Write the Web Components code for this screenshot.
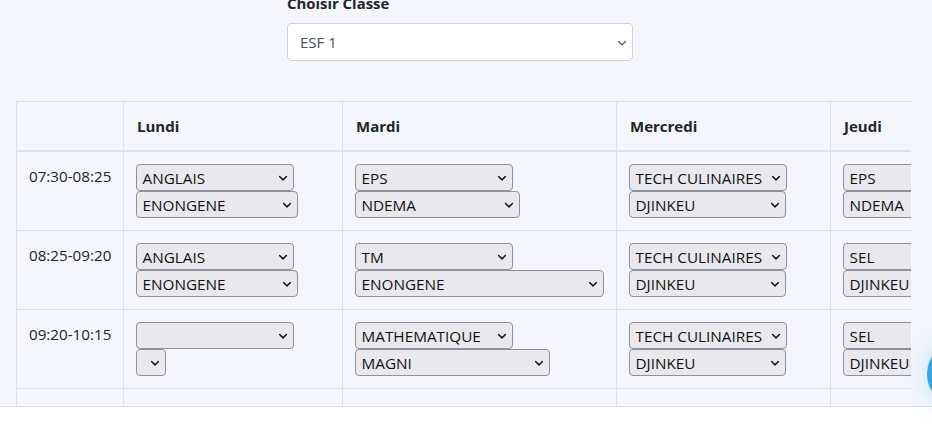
<!DOCTYPE html>
<html lang="fr">
<head>
<meta charset="utf-8">
<title>Emploi du temps</title>
<style>
  html, body { margin: 0; height: 100%; background: #fff; overflow: hidden; }
  body { font-family: "Open Sans", "Noto Sans", "Liberation Sans", sans-serif; color: #212529; }
</style>
</head>
<body>
<schedule-page>
  <class-picker label="Choisir Classe" value="ESF 1"></class-picker>
  <time-table></time-table>
</schedule-page>
<chat-bubble></chat-bubble>

<script>
const chevron = (sw) => `<svg viewBox="0 0 16 16" width="12" height="12" aria-hidden="true"><path d="M3.5 6l4.5 4.5L12.5 6" fill="none" stroke="currentColor" stroke-width="${sw}" stroke-linecap="round" stroke-linejoin="round"/></svg>`;

class SchedulePage extends HTMLElement {
  constructor() {
    super();
    this.attachShadow({ mode: 'open' });
    this.shadowRoot.innerHTML = `
      <style>
        :host {
          display: block;
          height: 407px;
          overflow: hidden;
          background: #f4f6fb;
          border-bottom: 1px solid #dfe1e6;
          box-sizing: border-box;
          padding: 0 21px 0 16px;
        }
      </style>
      <slot></slot>
    `;
  }
}

class ClassPicker extends HTMLElement {
  connectedCallback() {
    this.attachShadow({ mode: 'open' });
    this.shadowRoot.innerHTML = `
      <style>
        :host { display: block; margin: -9px 0 40px 271px; width: 346px; }
        label { display: block; font-size: 14.9px; font-weight: 700; line-height: 24px; margin-bottom: 8px; color: #212529; }
        .box {
          height: 38px; box-sizing: border-box; display: flex; align-items: center; justify-content: space-between;
          padding: 0 4px 0 12px; background: #fff; border: 1px solid #ced4da; border-radius: 4px;
          font-size: 15px; color: #495057;
        }
        svg { display: block; color: #495057; margin-top: 1px; }
      </style>
      <label>${this.getAttribute('label')}</label>
      <div class="box"><span>${this.getAttribute('value')}</span>${chevron(1.6)}</div>
    `;
  }
}

class PickBox extends HTMLElement {
  connectedCallback() {
    this.attachShadow({ mode: 'open' });
    this.shadowRoot.innerHTML = `
      <style>
        :host {
          display: flex; align-items: center; justify-content: space-between; box-sizing: border-box;
          height: 27px; padding: 0 4px 0 5.5px; background: #e9e9ed; border: 1px solid #8f8f9d; border-radius: 4px;
          font-size: 15.3px; color: #111; white-space: nowrap; overflow: hidden;
        }
        span { padding-top: 1px; }
        svg { display: block; flex: none; color: #15141a; }
      </style>
      <span><slot></slot></span>${chevron(2)}
    `;
    this.style.width = this.getAttribute('w') + 'px';
  }
}
customElements.define('pick-box', PickBox);

const DAYS = ['Lundi', 'Mardi', 'Mercredi', 'Jeudi'];
const WIDTHS = [107, 219, 274, 214, 170];
const ROWS = [
  ['07:30-08:25', [['ANGLAIS', 158, 'ENONGENE', 162], ['EPS', 158, 'NDEMA', 165], ['TECH CULINAIRES', 158, 'DJINKEU', 157], ['EPS', 158, 'NDEMA', 165]]],
  ['08:25-09:20', [['ANGLAIS', 158, 'ENONGENE', 162], ['TM', 158, 'ENONGENE', 249], ['TECH CULINAIRES', 158, 'DJINKEU', 157], ['SEL', 158, 'DJINKEU', 157]]],
  ['09:20-10:15', [['', 158, '', 30], ['MATHEMATIQUE', 158, 'MAGNI', 195], ['TECH CULINAIRES', 158, 'DJINKEU', 157], ['SEL', 158, 'DJINKEU', 157]]],
];

class TimeTable extends HTMLElement {
  connectedCallback() {
    this.attachShadow({ mode: 'open' });
    const cols = WIDTHS.map(w => `<col style="width:${w}px">`).join('');
    const head = DAYS.map(d => `<th>${d}</th>`).join('');
    const body = ROWS.map(([time, cells]) => `
      <tr>
        <td class="time">${time}</td>
        ${cells.map(c => `<td><div class="stack">
          <pick-box w="${c[1]}">${c[0]}</pick-box>
          <pick-box w="${c[3]}">${c[2]}</pick-box>
        </div></td>`).join('')}
        <td></td>
      </tr>`).join('');
    this.shadowRoot.innerHTML = `
      <style>
        :host { display: block; overflow: hidden; }
        table { border-collapse: collapse; table-layout: fixed; width: 984px; font-size: 15.2px; color: #212529; }
        th, td { border: 1px solid #dee2e6; padding: 12px; text-align: left; vertical-align: top; line-height: 24px; }
        th { font-size: 15px; font-weight: 700; height: 24px; border-bottom-width: 2px; padding: 12px 12px 12px 13px; }
        td { height: 54px; }
        .time { white-space: nowrap; padding-right: 0; }
        .stack { display: flex; flex-direction: column; align-items: flex-start; }
        .spacer td { height: 40px; }
      </style>
      <table>
        <colgroup>${cols}</colgroup>
        <thead><tr><th></th>${head}<th></th></tr></thead>
        <tbody>${body}
          <tr class="spacer"><td></td><td></td><td></td><td></td><td></td><td></td></tr>
        </tbody>
      </table>
    `;
  }
}

class ChatBubble extends HTMLElement {
  constructor() {
    super();
    this.attachShadow({ mode: 'open' });
    this.shadowRoot.innerHTML = `
      <style>
        :host {
          position: fixed; left: 927px; top: 340px; width: 68px; height: 68px; border-radius: 50%;
          background: #2ea8e8; box-shadow: 0 0 24px rgba(46, 168, 232, .25);
        }
      </style>
    `;
  }
}

customElements.define('schedule-page', SchedulePage);
customElements.define('class-picker', ClassPicker);
customElements.define('time-table', TimeTable);
customElements.define('chat-bubble', ChatBubble);
</script>
</body>
</html>
